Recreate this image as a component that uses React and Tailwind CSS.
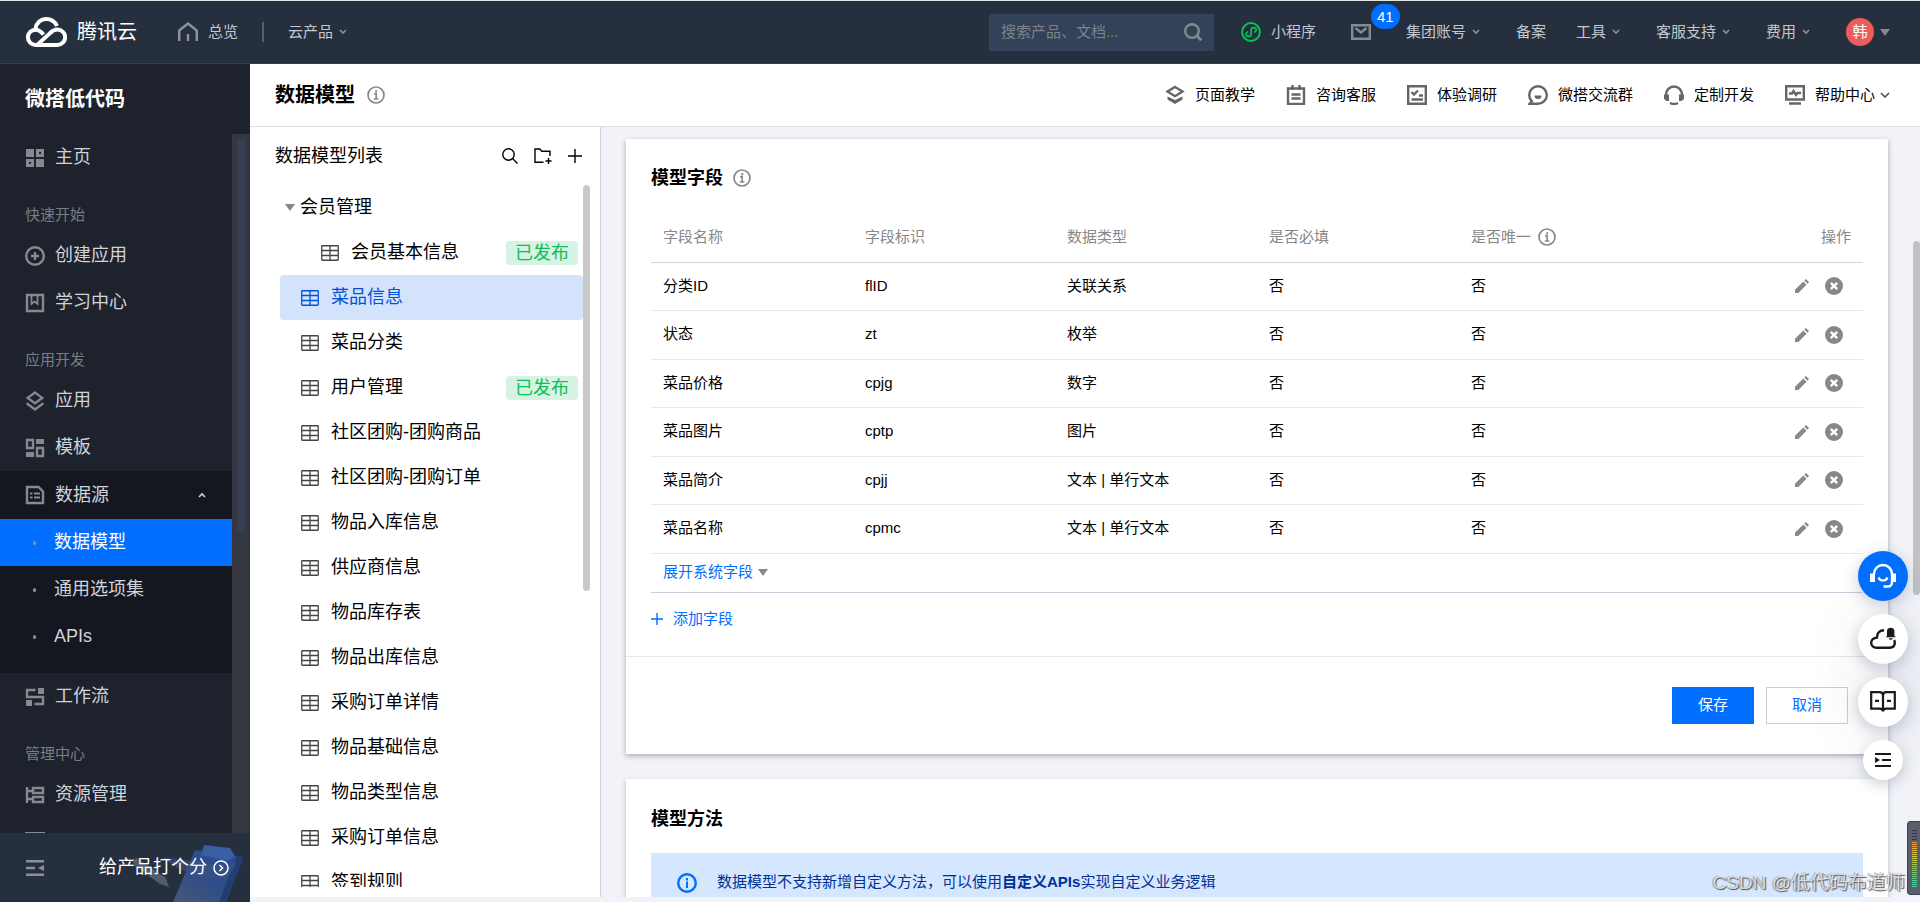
import React from "react";

const Svg = ({ size = 20, w, h, vb, className = "", children }) => (
  <svg
    width={w || size}
    height={h || size}
    viewBox={vb || `0 0 ${w || size} ${h || size}`}
    fill="none"
    stroke="currentColor"
    strokeWidth="2.400"
    className={`shrink-0 ${className}`}
    aria-hidden="true"
  >
    {children}
  </svg>
);

const Chevron = ({ className = "" }) => (
  <Svg w={8} h={6} className={className}>
    <path d="M1 1l3 3 3-3" strokeWidth="1.6" />
  </Svg>
);

const InfoIcon = ({ className = "" }) => (
  <Svg size={18} className={className}>
    <circle cx="9" cy="9" r="8" strokeWidth="1.7" />
    <path d="M7 7.7h2.2v5.3M6.8 13h4.6" strokeWidth="1.7" />
    <path d="M8.2 4.2h2v1.9h-2z" fill="currentColor" stroke="none" />
  </Svg>
);

const TableIcon = () => (
  <Svg w={18} h={16}>
    <rect x="0.75" y="0.75" width="16.5" height="14.5" rx="0.5" strokeWidth="1.3" />
    <path d="M1 5.5h16M1 10.5h16M9 1v14" strokeWidth="1.3" />
  </Svg>
);

const Caret = ({ className = "" }) => (
  <Svg w={10} h={7} className={className}>
    <path d="M0 0h10L5 7z" fill="currentColor" stroke="none" />
  </Svg>
);

const LayersIcon = () => (
  <Svg>
    <path d="M10 1.6l7.3 5.3L10 12.2 2.7 6.9z" />
    <path d="M1.6 12.2L10 18.4l8.4-6.2" />
  </Svg>
);

const side = {
  home: (
    <Svg>
      <path d="M1 1h8v8H1zM11 11h8v8h-8z" fill="currentColor" stroke="none" />
      <path d="M12.5 2.5h5v5h-5zM2.5 12.5h5v5h-5z" strokeWidth="3" />
    </Svg>
  ),
  create: (
    <Svg>
      <circle cx="10" cy="10" r="8.800" />
      <path d="M10 6v8M6 10h8" />
    </Svg>
  ),
  learn: (
    <Svg>
      <path d="M2 2h16v16H2z" />
      <path d="M6.5 3v8l3-2.4 3 2.4V3" strokeWidth="1.8" />
    </Svg>
  ),
  app: <LayersIcon />,
  template: (
    <Svg>
      <path d="M2 2h6v8H2zM12 10h6v8h-6z" />
      <path d="M11 1h8v5h-8zM1 14h8v5H1z" fill="currentColor" stroke="none" />
    </Svg>
  ),
  data: (
    <Svg>
      <path d="M2 2h11.5L18 6.5V18H2z" />
      <path d="M5 8.5h2.5M9 8.5h6M5 12.5h2.5M9 12.5h6" strokeWidth="2" />
    </Svg>
  ),
  flow: (
    <Svg>
      <path d="M10.5 3H2v7h16v7H9.5" />
      <path d="M13 1h6v6h-6zM1 13h6v6H1z" fill="currentColor" stroke="none" />
    </Svg>
  ),
  resource: (
    <Svg>
      <path d="M2 2v16M2 6h5M2 14h5" />
      <path d="M8 3h10v5H8zM8 12h10v5H8z" />
    </Svg>
  ),
  more: (
    <Svg>
      <path d="M0 1h20M1 1v17h18V1" />
    </Svg>
  ),
};

const SideItem = ({ icon, label }) => (
  <li>
    <a href="#" className="flex h-[47px] items-center gap-2.5 pl-[25px] text-[18px] text-[#d0d3d9]">
      <span className="text-[#848a90]">{side[icon]}</span>
      {label}
    </a>
  </li>
);

const SideLabel = ({ children }) => (
  <li className="h-[51px] pt-6 pl-[25px] text-[15px] leading-5 text-[#767f86]">{children}</li>
);

const SubItem = ({ label, active }) => (
  <a
    href="#"
    className={`flex h-[47px] items-center gap-[18px] pl-[33px] text-[18px] ${
      active ? "bg-[#006eff] text-white" : "text-[#d0d3d9]"
    }`}
  >
    <span className="h-1 w-[3px] rounded-sm bg-[#8b9095]" />
    {label}
  </a>
);

const TopLink = ({ label, chevron }) => (
  <a href="#" className="flex items-center gap-1.5 whitespace-nowrap">
    {label}
    {chevron && <Chevron className="mr-1.5 text-[#8b929c]" />}
  </a>
);

const tools = [
  [
    "页面教学",
    <Svg>
      <path d="M10 2l7.5 4.6L10 11.2 2.500 6.600z" />
      <path d="M2.500 11.500v3L10 19l7.500-4.500v-3L10 15z" fill="currentColor" stroke="none" />
    </Svg>,
  ],
  [
    "咨询客服",
    <Svg>
      <path d="M2 3.500h16V19H2z" />
      <path d="M6.500 0v5M13.500 0v5M5.500 9.500h9M5.500 13.500h9" />
    </Svg>,
  ],
  [
    "体验调研",
    <Svg>
      <path d="M1.200 1.200h17.600v17.600H1.200z" />
      <path d="M4.500 7l2.500 2.500L11 5.500M12 10.500h4M4.500 14.500h11.500" />
    </Svg>,
  ],
  [
    "微搭交流群",
    <Svg>
      <path d="M1.500 18.800h8.500a8.800 8.800 0 1 0-8.800-8.800c0 2.600 1 4.600 2.600 6.200z" />
      <path d="M6.500 10.500h7a3.500 3.500 0 0 1-7 0z" fill="currentColor" stroke="none" />
    </Svg>,
  ],
  [
    "定制开发",
    <Svg>
      <path d="M2 10.500V9.500a8 8 0 0 1 16 0v1" />
      <path d="M0 9.500h5V16H2.500L0 14zM15 9.500h5V14l-2.500 2H15z" fill="currentColor" stroke="none" />
      <path d="M6 18c2.500 1.300 5.500 1.300 8 0" />
    </Svg>,
  ],
  [
    "帮助中心",
    <Svg>
      <path d="M1.200 1.200h17.600v13.300H1.200zM4 18.500h12" />
      <path d="M4 8.500h3l1.500-2.500 2.500 4 1.500-2H16" />
    </Svg>,
  ],
];

const models = [
  { name: "会员基本信息", nested: true, published: true },
  { name: "菜品信息", active: true },
  { name: "菜品分类" },
  { name: "用户管理", published: true },
  { name: "社区团购-团购商品" },
  { name: "社区团购-团购订单" },
  { name: "物品入库信息" },
  { name: "供应商信息" },
  { name: "物品库存表" },
  { name: "物品出库信息" },
  { name: "采购订单详情" },
  { name: "物品基础信息" },
  { name: "物品类型信息" },
  { name: "采购订单信息" },
  { name: "签到规则" },
];

const fields = [
  ["分类ID", "flID", "关联关系"],
  ["状态", "zt", "枚举"],
  ["菜品价格", "cpjg", "数字"],
  ["菜品图片", "cptp", "图片"],
  ["菜品简介", "cpjj", "文本 | 单行文本"],
  ["菜品名称", "cpmc", "文本 | 单行文本"],
];

function Header() {
  return (
    <header className="flex h-16 shrink-0 items-center border-t border-b border-t-[#dfe5e4] border-b-[#333f55] bg-[#262f3e] pr-[30px] pl-[25px] text-[15px] text-[#c3c8cd]">
      <a href="#" className="flex items-center gap-2.5 text-[20px] font-normal text-white">
        <Svg w={42} h={30}>
          <path
            d="M10.500 11.500C11.500 5.500 16 2 21 2c5 0 9 2.800 11 7M18.500 17.500c-2.500-3-5-4.800-8-4.800a7.600 7.600 0 0 0 0 15.200h22a7.600 7.600 0 0 0 0-15.300c-3.500 0-5.500 1.500-8 4L12.500 27.600"
            strokeWidth="4"
          />
        </Svg>
        腾讯云
      </a>
      <a href="#" className="ml-[41px] flex items-center gap-2.5">
        <Svg className="text-[#8d9499]">
          <path d="M1.200 19V8.500L10 1.500l8.800 7V19M10 12v7" />
        </Svg>
        总览
      </a>
      <span className="mx-6 h-5 w-0.5 bg-[#56606b]" />
      <TopLink label="云产品" chevron />
      <div className="ml-auto flex h-[37px] w-[225px] items-center bg-[#334258] px-3">
        <input
          type="text"
          aria-label="搜索"
          placeholder="搜索产品、文档..."
          className="min-w-0 flex-1 bg-transparent outline-none placeholder:text-[#7d838a]"
        />
        <button type="button" aria-label="搜索">
          <Svg w={18} h={18} className="text-[#808890]">
            <circle cx="8" cy="8" r="6.800" />
            <path d="M12.800 12.800l4.500 4.500" strokeWidth="3" />
          </Svg>
        </button>
      </div>
      <a href="#" className="ml-[27px] flex items-center gap-2.5">
        <Svg className="text-[#0abf5b]">
          <circle cx="10" cy="10" r="8.900" strokeWidth="2" />
          <path
            d="M13 10.200c1.500-.4 2.200-1.200 2.200-2.300 0-1.400-1.100-2.300-2.500-2.300-1.500 0-2.600 1-2.600 2.400v4c0 1.400-1.100 2.400-2.600 2.400-1.400 0-2.500-.9-2.500-2.300 0-1.100.7-1.900 2.200-2.300"
            strokeWidth="1.700"
          />
        </Svg>
        小程序
      </a>
      <a href="#" aria-label="消息" className="relative ml-[35px]">
        <Svg w={20} h={16} className="text-[#848b93]">
          <path d="M1.200 1.200h17.600v13.600H1.200zM4.500 4l5.500 4.500L15.500 4" />
        </Svg>
        <span className="absolute bottom-[11px] left-5 rounded-full bg-[#006eff] px-1.5 text-[15px] leading-[25px] text-white">
          41
        </span>
      </a>
      <nav className="ml-[35px] flex items-center gap-[30px]">
        <TopLink label="集团账号" chevron />
        <TopLink label="备案" />
        <TopLink label="工具" chevron />
        <TopLink label="客服支持" chevron />
        <TopLink label="费用" chevron />
        <button type="button" className="flex items-center gap-1.5">
          <span className="flex size-7 items-center justify-center rounded-full bg-[#eb5c5c] text-[15px] text-white">
            韩
          </span>
          <Caret className="text-[#8a8a8a]" />
        </button>
      </nav>
    </header>
  );
}

function Sidebar() {
  return (
    <aside className="flex w-[250px] shrink-0 flex-col bg-[#1e222d]">
      <h2 className="flex h-[70px] shrink-0 items-center pl-[25px] text-[20px] font-bold text-white">微搭低代码</h2>
      <div className="flex min-h-0 flex-1">
        <ul className="min-w-0 flex-1 overflow-hidden">
          <SideItem icon="home" label="主页" />
          <SideLabel>快速开始</SideLabel>
          <SideItem icon="create" label="创建应用" />
          <SideItem icon="learn" label="学习中心" />
          <SideLabel>应用开发</SideLabel>
          <SideItem icon="app" label="应用" />
          <SideItem icon="template" label="模板" />
          <li className="bg-[#151720] pb-[13px]">
            <button
              type="button"
              className="flex h-12 w-full items-center gap-2.5 pr-[26px] pl-[25px] text-[18px] text-[#d0d3d9]"
            >
              <span className="text-[#848a90]">{side.data}</span>
              数据源
              <Chevron className="ml-auto rotate-180" />
            </button>
            <SubItem label="数据模型" active />
            <SubItem label="通用选项集" />
            <SubItem label="APIs" />
          </li>
          <SideItem icon="flow" label="工作流" />
          <SideLabel>管理中心</SideLabel>
          <SideItem icon="resource" label="资源管理" />
          <SideItem icon="more" />
        </ul>
        <div className="w-[18px] bg-[#34373f] px-[5px] pt-[5px]">
          <div className="h-[393px] w-2 bg-[#354058]" />
        </div>
      </div>
      <div className="relative flex h-[69px] shrink-0 items-center gap-[55px] bg-[#262f3e] pl-[26px]">
        <svg className="absolute right-0 bottom-0" width="130" height="69" viewBox="0 0 130 69" aria-hidden="true">
          <defs>
            <linearGradient id="board" x1="0" y1="1" x2="1" y2="0">
              <stop offset="0" stopColor="#4a5876" />
              <stop offset="0.500" stopColor="#2d4c88" />
              <stop offset="1" stopColor="#2a4d92" />
            </linearGradient>
          </defs>
          <path d="M75 17l48 7-17 45H53z" fill="url(#board)" />
          <path d="M117 22l7 3-19 44h-6z" fill="#223d73" />
          <path d="M84 12l26 3 5 8-7 5-27-6z" fill="#3a5da4" />
          <path d="M42 24l68 9 7-7c-2 12-9 20-18 20-16 0-38-6-57-22z" fill="#3c5482" opacity="0.600" />
          <path d="M12 27l5-2 29 20 3 9-9-3-25-18z" fill="#5a6371" opacity="0.850" />
        </svg>
        <button type="button" aria-label="收起菜单" className="text-[#8a9197]">
          <Svg w={18} h={16}>
            <path d="M0 1.200h18M0 8h9M0 14.800h18" />
            <path d="M18 5v6l-6-3z" fill="currentColor" stroke="none" />
          </Svg>
        </button>
        <a href="#" className="relative flex items-center gap-1.5 whitespace-nowrap text-[18px] text-white">
          给产品打个分
          <Svg size={16}>
            <circle cx="8" cy="8" r="7" strokeWidth="1.500" />
            <path d="M6.500 5l3 3-3 3" strokeWidth="1.500" />
          </Svg>
        </a>
      </div>
    </aside>
  );
}

function ModelList() {
  return (
    <section className="flex w-[351px] shrink-0 flex-col border-r border-[#cfd5e0] bg-white pb-2.5 text-[18px]">
      <div className="flex h-[58px] shrink-0 items-center gap-4 pr-[18px] pl-[25px]">
        <h2 className="mr-auto">数据模型列表</h2>
        <button type="button" aria-label="搜索模型">
          <Svg size={16}>
            <circle cx="6.500" cy="6.500" r="5.700" strokeWidth="1.400" />
            <path d="M10.800 10.800l4.700 4.700" strokeWidth="1.400" />
          </Svg>
        </button>
        <button type="button" aria-label="新建文件夹">
          <Svg w={18} h={16}>
            <path d="M9.500 14.300H1V1h4.800l2 2.200H16V8M14.500 10v6M11.500 13h6" strokeWidth="1.400" />
          </Svg>
        </button>
        <button type="button" aria-label="新建模型">
          <Svg size={14}>
            <path d="M7 0v14M0 7h14" strokeWidth="1.400" />
          </Svg>
        </button>
      </div>
      <div className="flex min-h-0 flex-1 pr-2.5 pl-[30px]">
        <ul className="min-w-0 flex-1 overflow-hidden">
          <li className="flex h-[45px] items-center gap-[5px] pl-[5px]">
            <Caret className="text-[#888]" />
            会员管理
          </li>
          {models.map((m) => (
            <li key={m.name}>
              <a
                href="#"
                className={`flex h-[45px] items-center gap-3 rounded-[4px] pr-[5px] ${m.nested ? "pl-[41px]" : "pl-[21px]"} ${
                  m.active ? "bg-[#d4e3fc] text-[#0052d9]" : ""
                }`}
              >
                <span className={m.active ? "" : "text-[#444]"}>
                  <TableIcon />
                </span>
                <span className="whitespace-nowrap">{m.name}</span>
                {m.published && (
                  <span className="ml-auto rounded-[4px] bg-[#d6f3e3] px-[9px] leading-6 whitespace-nowrap text-[#0abf5b]">
                    已发布
                  </span>
                )}
              </a>
            </li>
          ))}
        </ul>
        <div className="h-[406px] w-[7px] rounded-full bg-[#c9c9c9]" />
      </div>
    </section>
  );
}

function FieldsCard() {
  return (
    <section className="bg-white shadow-[0_2px_5px_rgba(54,58,80,0.4)]">
      <div className="px-[25px] pt-[25px]">
        <h2 className="flex h-7 items-center gap-2.5 text-[18px] font-bold">
          模型字段
          <InfoIcon className="text-[#888]" />
        </h2>
        <table className="mt-5 w-full table-fixed border-collapse text-left text-[15px]">
          <thead>
            <tr className="h-[50px] border-b border-[#cfd5de] text-[#888]">
              {["字段名称", "字段标识", "数据类型", "是否必填"].map((h) => (
                <th key={h} className="px-3 font-normal">
                  {h}
                </th>
              ))}
              <th className="px-3 font-normal">
                <span className="flex items-center gap-[7px]">
                  是否唯一 <InfoIcon />
                </span>
              </th>
              <th className="px-3 text-right font-normal">操作</th>
            </tr>
          </thead>
          <tbody>
            {fields.map((f) => (
              <tr key={f[0]} className="border-b border-[#e5e8ed] odd:h-12 even:h-[49px]">
                {[...f, "否", "否"].map((c, i) => (
                  <td key={i} className="px-3">
                    {c}
                  </td>
                ))}
                <td className="pr-5">
                  <span className="flex items-center justify-end gap-4 text-[#888]">
                    <button type="button" aria-label={`编辑${f[0]}`}>
                      <Svg size={14}>
                        <path
                          d="M0 14v-3.300l8.300-8.200 3.200 3.200L3.300 14zM9.300 1.600L10.900 0 14 3.100l-1.600 1.600z"
                          fill="currentColor"
                          stroke="none"
                        />
                      </Svg>
                    </button>
                    <button type="button" aria-label={`删除${f[0]}`}>
                      <Svg size={18}>
                        <circle cx="9" cy="9" r="9" fill="currentColor" stroke="none" />
                        <path d="M5.800 5.800l6.400 6.400M12.200 5.800l-6.400 6.400" stroke="#fff" strokeWidth="2.400" />
                      </Svg>
                    </button>
                  </span>
                </td>
              </tr>
            ))}
          </tbody>
        </table>
        <div className="flex h-[39px] items-center border-b border-[#c8cfdb] px-3 text-[15px]">
          <button type="button" className="flex items-center gap-[5px] text-[#006eff]">
            展开系统字段
            <Caret className="text-[#888]" />
          </button>
        </div>
        <button type="button" className="mt-[15px] mb-[26px] flex items-center gap-2.5 text-[15px] leading-[22px] text-[#006eff]">
          <Svg size={12}>
            <path d="M6 0v12M0 6h12" strokeWidth="1.400" />
          </Svg>
          添加字段
        </button>
      </div>
      <div className="flex justify-end gap-3 border-t border-[#e5e8ed] pt-[30px] pr-10 pb-[30px] text-[15px]">
        <button type="button" className="h-[37px] w-[82px] bg-[#006eff] text-white">
          保存
        </button>
        <button type="button" className="h-[37px] w-[82px] border border-[#c8cfdb] text-[#006eff]">
          取消
        </button>
      </div>
    </section>
  );
}

function FloatTools() {
  const round =
    "flex size-[50px] items-center justify-center rounded-full bg-white text-[#1a1a1a] shadow-[0_4px_16px_rgba(54,68,100,0.28),0_8px_60px_rgba(54,68,100,0.12)]";
  return (
    <div className="absolute top-[551px] right-3 flex flex-col items-center gap-[13px]">
      <button
        type="button"
        aria-label="在线客服"
        className="flex size-[50px] items-center justify-center rounded-full bg-[#006eff] text-white shadow-[0_4px_16px_rgba(54,68,100,0.28)]"
      >
        <Svg size={26}>
          <path d="M4 11a9 9 0 0 1 18 0v8.500a4 4 0 0 1-4 4h-4.500" strokeWidth="2.400" />
          <path d="M0 10.500h5V19H0zM21 10.500h5V19h-5z" fill="currentColor" stroke="none" />
          <path d="M8.500 14.500c1.500 4 7.500 4 9 0" strokeWidth="2.200" />
        </Svg>
      </button>
      <button type="button" aria-label="云助手" className={round}>
        <Svg size={26}>
          <path
            d="M14 4.200C9.800 4.200 7 7 7 11.500c-3.500.3-5.800 2.500-5.800 5.300 0 3 2.300 5 5.300 5h13c3.300 0 5.300-2 5.300-5 0-1-.2-1.800-.7-2.600"
            strokeWidth="2.400"
          />
          <path
            d="M17 10V5.500a3.700 3.700 0 0 1 7.400 0V10l1.600 1.200H15.600zM18.600 12.300h4.200a2.200 2.200 0 0 1-4.200 0z"
            fill="currentColor"
            stroke="none"
          />
        </Svg>
      </button>
      <button type="button" aria-label="文档" className={round}>
        <Svg size={26}>
          <path d="M1.200 3.200h8.300c2 0 3.500 1.200 3.500 3 0-1.800 1.500-3 3.500-3h8.300v16.500h-8.300c-2 0-3.500.8-3.500 2.800 0-2-1.500-2.800-3.500-2.800H1.200zM13 6v15M5 11.800h4M17 11.800h4" strokeWidth="2.200" />
        </Svg>
      </button>
      <button
        type="button"
        aria-label="收起"
        className="flex size-10 items-center justify-center rounded-full bg-white text-[#1a1a1a] shadow-[0_4px_14px_rgba(54,68,100,0.28)]"
      >
        <Svg w={16} h={14}>
          <path d="M0 1h16M7 7h9M0 13h16" strokeWidth="2" />
          <path d="M0 4v6l5-3z" fill="currentColor" stroke="none" />
        </Svg>
      </button>
    </div>
  );
}

export default function App() {
  return (
    <div className="relative flex h-screen flex-col overflow-hidden bg-[#f2f3f8] font-['Liberation_Sans','Noto_Sans_CJK_SC',sans-serif] text-black">
      <Header />
      <div className="flex min-h-0 flex-1">
        <Sidebar />
        <div className="flex min-w-0 flex-1 flex-col pb-[5px]">
          <div className="flex h-[63px] shrink-0 items-center border-b border-[#dcdedf] bg-white pr-[30px] pl-[25px]">
            <h1 className="text-[20px] font-bold">数据模型</h1>
            <InfoIcon className="ml-3 text-[#888]" />
            <nav className="ml-auto flex items-center gap-[31px] text-[15px]">
              {tools.map(([label, icon], i) => (
                <a key={label} href="#" className="flex items-center gap-2.5 whitespace-nowrap">
                  <span className="text-[#666]">{icon}</span>
                  {label}
                  {i === 5 && (
                    <Svg w={10} h={7} className="-ml-[5px] text-[#444]">
                      <path d="M1 1l4 4 4-4" strokeWidth="1.500" />
                    </Svg>
                  )}
                </a>
              ))}
            </nav>
          </div>
          <div className="flex min-h-0 flex-1">
            <ModelList />
            <main className="flex min-w-0 flex-1 flex-col gap-[25px] overflow-hidden px-[25px] pt-3">
              <FieldsCard />
              <section className="bg-white px-[25px] pt-[26px] shadow-[0_2px_5px_rgba(54,58,80,0.3)]">
                <h2 className="h-7 text-[18px] leading-7 font-bold">模型方法</h2>
                <p className="mt-5 flex h-[60px] items-center gap-5 bg-[#d5e6ff] px-[26px] text-[15px] text-[#003197]">
                  <Svg className="text-[#006eff]">
                    <circle cx="10" cy="10" r="8.800" />
                    <path d="M10 5v2.500M10 8.500V15" strokeWidth="2" />
                  </Svg>
                  <span>
                    数据模型不支持新增自定义方法，可以使用<b>自定义APIs</b>实现自定义业务逻辑
                  </span>
                </p>
              </section>
            </main>
            <div className="w-[7px] shrink-0 pt-[114px]">
              <div className="h-[354px] rounded-full bg-[#c1c2c6]" />
            </div>
          </div>
        </div>
      </div>
      <FloatTools />
      <div className="absolute right-0 bottom-[7px] flex h-[74px] w-[13px] flex-col items-start rounded-l-[4px] border border-r-0 border-[#3c404c] bg-[#5a5e6c] pt-2 pl-1">
        <div className="h-3 w-[5px] bg-[repeating-linear-gradient(to_bottom,#33363f_0_1px,#5a5e6c_1px_3px)]" />
        <div className="h-[46px] w-[5px] bg-[repeating-linear-gradient(to_bottom,transparent_0_1px,#5a5e6c_1px_2px),linear-gradient(to_bottom,#e8963c,#d8d048_30%,#7fc864_65%,#3fd8c0)]" />
      </div>
      <span className="absolute right-[15px] bottom-1 text-[19px] leading-[30px] whitespace-nowrap text-white/70 [text-shadow:1px_1px_1px_#555,-1px_0_1px_#999]">
        CSDN @低代码布道师
      </span>
    </div>
  );
}
